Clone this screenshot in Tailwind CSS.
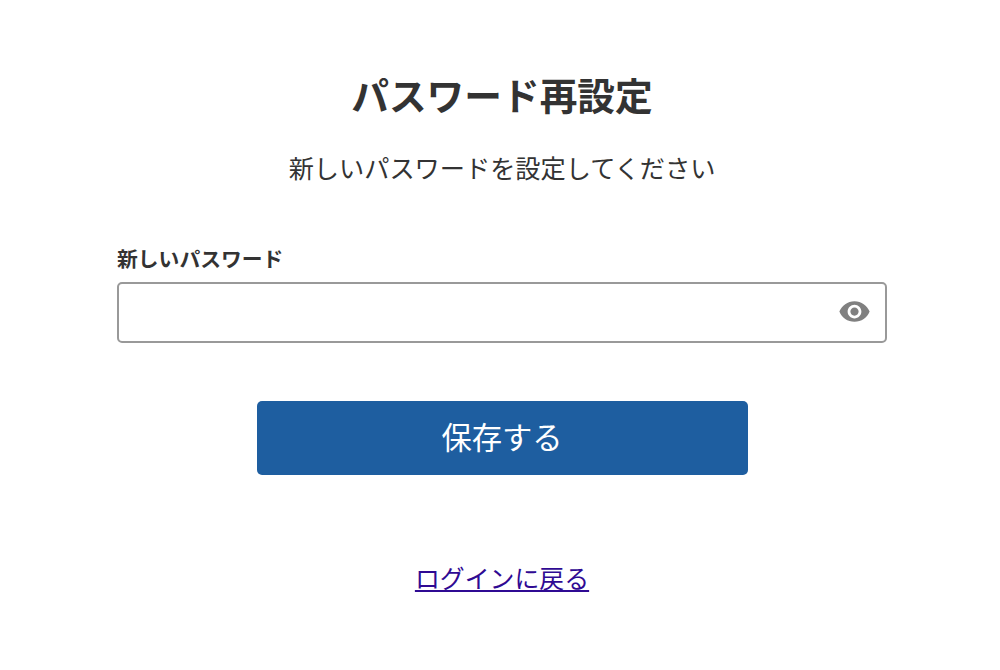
<!DOCTYPE html>
<html lang="ja">
<head>
  <meta charset="UTF-8" />
  <meta name="viewport" content="width=device-width, initial-scale=1" />
  <title>パスワード再設定</title>
  <script src="https://cdn.jsdelivr.net/npm/@tailwindcss/browser@4"></script>
</head>
<body class="bg-white h-screen overflow-hidden text-[#333] font-['Noto_Sans_CJK_JP',sans-serif]">

  <main class="w-[770px] ml-[117px] pt-[69px] flex flex-col items-center">
    <h1 class="text-[37.7px] leading-[50px] font-bold whitespace-nowrap">パスワード再設定</h1>
    <p class="mt-7 text-[25.2px] leading-10 whitespace-nowrap">新しいパスワードを設定してください</p>

    <form class="w-full mt-14 flex flex-col items-center">
      <label for="password" class="self-start text-[20.8px] leading-[30px] font-bold">新しいパスワード</label>
      <div class="w-full h-[61px] mt-[9px] flex items-center border-2 border-[#999] rounded-[5px] pr-[14px]">
        <input id="password" type="password" class="flex-1 h-full px-4 text-2xl outline-none" />
        <button type="button" id="toggleBtn" aria-label="パスワードを表示" class="pb-0.5">
          <svg class="block w-[33px] h-[33px]" viewBox="0 0 24 24" fill="#808080">
            <path d="M12 4.5C7 4.5 2.73 7.61 1 12c1.73 4.39 6 7.5 11 7.5s9.27-3.11 11-7.5c-1.73-4.39-6-7.5-11-7.5zM12 17c-2.76 0-5-2.24-5-5s2.24-5 5-5 5 2.24 5 5-2.24 5-5 5zm0-8c-1.66 0-3 1.34-3 3s1.34 3 3 3 3-1.34 3-3-1.34-3-3-3z" />
          </svg>
        </button>
      </div>
      <button type="button" class="w-[491px] h-[74px] mt-[58px] pb-0.5 rounded-[5px] bg-[#1e5ea0] text-white text-[30.3px]">保存する</button>
    </form>

    <a href="#" class="mt-[82px] text-[24.9px] leading-10 text-[#2f0a93] underline">ログインに戻る</a>
  </main>

  <script>
    const passwordInput = document.getElementById('password');
    document.getElementById('toggleBtn').addEventListener('click', () => {
      passwordInput.type = passwordInput.type === 'password' ? 'text' : 'password';
    });
  </script>

</body>
</html>
